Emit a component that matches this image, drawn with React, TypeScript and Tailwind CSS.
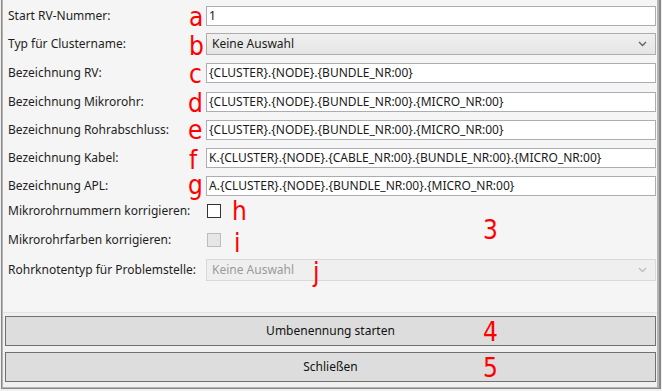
import React from "react";

const Chevron = ({ color }: { color: string }) => (
  <svg width="9" height="6" viewBox="0 0 9 6" className="shrink-0">
    <polyline points="1,1 4.5,4.5 8,1" fill="none" stroke={color} strokeWidth="1.3" />
  </svg>
);

const Label = ({ children }: { children: React.ReactNode }) => (
  <div className="w-[203px] shrink-0 pl-[5px] whitespace-nowrap text-[12px] text-[#1e1e1e]">{children}</div>
);

const TextBox = ({ value }: { value: string }) => (
  <div className="flex-1 h-[20px] border border-[#abadb3] bg-white flex items-center pl-[2px] text-[12px] text-[#1a1a1a] whitespace-nowrap overflow-hidden">
    {value}
  </div>
);

const Row = ({ label, mt, h, children }: { label: string; mt: string; h: string; children: React.ReactNode }) => (
  <div className={`flex items-center ${mt} ${h}`}>
    <Label>{label}</Label>
    {children}
  </div>
);

const Anno = ({ t, cls }: { t: string; cls: string }) => (
  <span
    className={`absolute leading-[22px] text-[26px] text-[#ff0000] ${cls}`}
    style={{ fontFamily: '"Liberation Sans Narrow", "Arial Narrow", "DejaVu Sans Condensed", sans-serif' }}
  >
    {t}
  </span>
);

export default function App() {
  return (
    <div
      className="relative w-[662px] h-[391px] bg-[#f0f0f0] pl-[1px] pr-[1px] pb-[2px]"
      style={{ fontFamily: '"Noto Sans", "Open Sans", sans-serif' }}
    >
      <div className="h-full border-l border-r-2 border-b border-[#888888]">
        <div className="h-full flex flex-col border-l border-r-2 border-b border-[#b4b4b4]">
          <div className="h-[313px] bg-[#f5f5f5] border-b border-[#e3e3e3] pr-[1px] flex flex-col">
            <Row label="Start RV-Nummer:" mt="mt-[6px]" h="h-[20px]">
              <TextBox value="1" />
            </Row>
            <Row label="Typ für Clustername:" mt="mt-[7px]" h="h-[22px]">
              <div className="flex-1 h-[22px] border border-[#acacac] bg-gradient-to-b from-[#f0f0f0] to-[#e5e5e5] flex items-center justify-between pl-[5px] pr-[8px] text-[12px] text-[#1a1a1a]">
                <span>Keine Auswahl</span>
                <Chevron color="#606060" />
              </div>
            </Row>
            <Row label="Bezeichnung RV:" mt="mt-[8px]" h="h-[20px]">
              <TextBox value="{CLUSTER}.{NODE}.{BUNDLE_NR:00}" />
            </Row>
            <Row label="Bezeichnung Mikrorohr:" mt="mt-[9px]" h="h-[20px]">
              <TextBox value="{CLUSTER}.{NODE}.{BUNDLE_NR:00}.{MICRO_NR:00}" />
            </Row>
            <Row label="Bezeichnung Rohrabschluss:" mt="mt-[8px]" h="h-[20px]">
              <TextBox value="{CLUSTER}.{NODE}.{BUNDLE_NR:00}.{MICRO_NR:00}" />
            </Row>
            <Row label="Bezeichnung Kabel:" mt="mt-[8px]" h="h-[20px]">
              <TextBox value="K.{CLUSTER}.{NODE}.{CABLE_NR:00}.{BUNDLE_NR:00}.{MICRO_NR:00}" />
            </Row>
            <Row label="Bezeichnung APL:" mt="mt-[8px]" h="h-[20px]">
              <TextBox value="A.{CLUSTER}.{NODE}.{BUNDLE_NR:00}.{MICRO_NR:00}" />
            </Row>
            <Row label="Mikrorohrnummern korrigieren:" mt="mt-[8px]" h="h-[14px]">
              <div className="ml-[1px] w-[14px] h-[14px] border border-[#333333] bg-white" />
            </Row>
            <Row label="Mikrorohrfarben korrigieren:" mt="mt-[15px]" h="h-[14px]">
              <div className="ml-[1px] w-[14px] h-[14px] border border-[#bcbcbc] bg-[#e6e6e6]" />
            </Row>
            <Row label="Rohrknotentyp für Problemstelle:" mt="mt-[12px]" h="h-[22px]">
              <div className="flex-1 h-[22px] border border-[#d9d9d9] bg-[#efefef] flex items-center justify-between pl-[5px] pr-[8px] text-[12px] text-[#9a9a9a]">
                <span>Keine Auswahl</span>
                <Chevron color="#bdbdbd" />
              </div>
            </Row>
          </div>
          <div className="flex-1 flex flex-col gap-[6px] px-[2px] pt-[3px] pr-[1px]">
            <div className="h-[30px] border border-[#707070] bg-[#dddddd] flex items-center justify-center text-[12px] text-[#111111]">
              Umbenennung starten
            </div>
            <div className="h-[30px] border border-[#707070] bg-[#dddddd] flex items-center justify-center text-[12px] text-[#111111]">
              Schließen
            </div>
          </div>
        </div>
      </div>
      <Anno t="a" cls="left-[189px] top-[6px]" />
      <Anno t="b" cls="left-[189px] top-[35px]" />
      <Anno t="c" cls="left-[189px] top-[63px]" />
      <Anno t="d" cls="left-[188px] top-[92px]" />
      <Anno t="e" cls="left-[188px] top-[119px]" />
      <Anno t="f" cls="left-[189px] top-[149px]" />
      <Anno t="g" cls="left-[188px] top-[174px]" />
      <Anno t="h" cls="left-[232px] top-[200px]" />
      <Anno t="i" cls="left-[234px] top-[232px]" />
      <Anno t="j" cls="left-[313px] top-[261px]" />
      <Anno t="3" cls="left-[483px] top-[219px]" />
      <Anno t="4" cls="left-[483px] top-[321px]" />
      <Anno t="5" cls="left-[483px] top-[357px]" />
    </div>
  );
}
